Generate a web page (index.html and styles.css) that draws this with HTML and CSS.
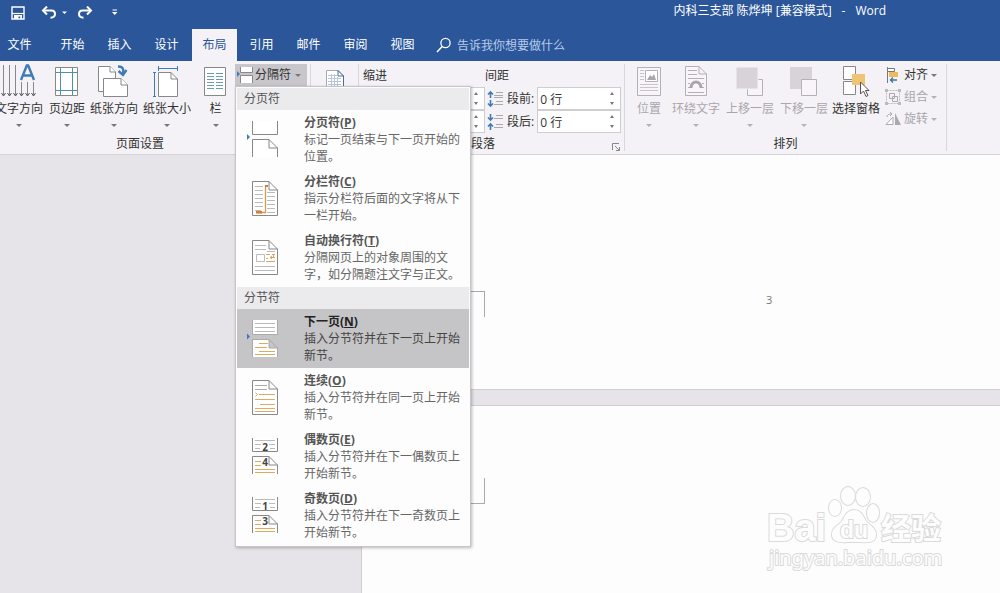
FILE: index.html
```html
<!DOCTYPE html>
<html lang="zh-CN">
<head>
<meta charset="utf-8">
<title>内科三支部 陈烨坤 [兼容模式] - Word</title>
<link rel="stylesheet" href="styles.css">
</head>
<body>
<div class="app">
  <header class="header">
    <div class="titlebar">
      <div class="quick">
        <button class="qbtn save" aria-label="保存"><svg width="14" height="14" viewBox="0 0 14 14"><path d="M1 1H13V13H1Z" fill="none" stroke="#fff" stroke-width="1.4"/><path d="M1 7.500H13" stroke="#fff" stroke-width="1.2"/><path d="M3 9H11V13H9.300V10.500H7.500V13H3Z" fill="#fff"/></svg></button>
        <button class="qbtn undo" aria-label="撤消"><svg width="16" height="13" viewBox="0 0 16 13"><path d="M2 4.500H10.500C13 4.500 14 6 14 8S12.500 11.500 9.500 11.700" fill="none" stroke="#fff" stroke-width="2"/><path d="M6 .5L2 4.500L6 8.500" fill="none" stroke="#fff" stroke-width="2"/></svg></button>
        <button class="qbtn more" aria-label="撤消列表"><svg width="6" height="4" viewBox="0 0 6 4"><path d="M0 .5H5L2.500 3Z" fill="#fff"/></svg></button>
        <button class="qbtn redo" aria-label="恢复"><svg width="16" height="13" viewBox="0 0 16 13"><path d="M14 4.500H5.500C3 4.500 2 6 2 8S3.500 11.500 6.500 11.700" fill="none" stroke="#fff" stroke-width="2"/><path d="M10 .5L14 4.500L10 8.500" fill="none" stroke="#fff" stroke-width="2"/></svg></button>
        <button class="qbtn custom" aria-label="自定义快速访问工具栏"><svg width="6" height="7" viewBox="0 0 6 7"><path d="M.5 1H5" stroke="#fff"/><path d="M0 3H5.500L2.700 6Z" fill="#fff"/></svg></button>
      </div>
      <div class="doc-title"><span>内科三支部 陈烨坤 [兼容模式]</span><span>-</span><span>Word</span></div>
    </div>
    <nav class="tabs">
      <button class="tab file">文件</button>
      <button class="tab">开始</button>
      <button class="tab">插入</button>
      <button class="tab">设计</button>
      <button class="tab active">布局</button>
      <button class="tab">引用</button>
      <button class="tab">邮件</button>
      <button class="tab">审阅</button>
      <button class="tab">视图</button>
      <label class="tell"><svg width="16" height="16" viewBox="0 0 16 16"><circle cx="9.500" cy="6" r="4.600" fill="none" stroke="#fff" stroke-width="1.300"/><path d="M6.200 9.500L1 15" stroke="#fff" stroke-width="1.500"/></svg><input class="tell-input" type="text" placeholder="告诉我你想要做什么" aria-label="告诉我你想要做什么"></label>
    </nav>
  </header>

  <div class="ribbon">
    <section class="group setup">
      <div class="tools">
        <button class="big"><svg width="36" height="34" viewBox="0 0 36 34"><g stroke="#888" fill="none"><path d="M2.500 1V31M8.500 1V31M14.500 1V31M20.500 18V31M26.500 18V31M32.500 18V31"/><path d="M.5 29L2.500 32L4.500 29M6.500 29L8.500 32L10.500 29M12.500 29L14.500 32L16.500 29M18.500 29L20.500 32L22.500 29M24.500 29L26.500 32L28.500 29M30.500 29L32.500 32L34.500 29" stroke="#555"/></g><path d="M20 16L25.800 1.500H27.200L33 16M22 11.500H31" fill="none" stroke="#3f7cb5" stroke-width="2.400"/></svg><span>文字方向</span><i class="arrow"></i></button>
        <button class="big"><svg width="24" height="34" viewBox="0 0 24 34"><path d="M.5 3.500H22.500V31.500H.5Z" fill="#fff" stroke="#888"/><path d="M5.500 4V31M17.500 4V31M1 8.500H22M1 26.500H22" stroke="#4d90ad"/></svg><span>页边距</span><i class="arrow"></i></button>
        <button class="big"><svg width="34" height="34" viewBox="0 0 34 34"><g fill="#fff" stroke="#888"><path d="M1.500 2.500H13L18.500 8V27.500H1.500Z"/><path d="M13 2.500V8H18.500"/><path d="M6.500 14.500H24L30.500 21V32.500H6.500Z"/><path d="M24 14.500V21H30.500"/></g><path d="M21 2.500C26 2.500 27 5 26 10M21.500 7L26 11L29.500 6" fill="none" stroke="#3f7cb5" stroke-width="2.400"/></svg><span>纸张方向</span><i class="arrow"></i></button>
        <button class="big"><svg width="28" height="34" viewBox="0 0 28 34"><path d="M5.500 8.500H18L24.500 15V32.500H5.500Z" fill="#fff" stroke="#888"/><path d="M18 8.500V15H24.500" fill="none" stroke="#888"/><path d="M5.500 4.500H24.500M5.500 2V7M24.500 2V7M1.500 9V32M0 8.500H3M0 32.500H3" stroke="#3f7cb5"/></svg><span>纸张大小</span><i class="arrow"></i></button>
        <button class="big"><svg width="26" height="34" viewBox="0 0 26 34"><path d="M1.500 3.500H22.500V31.500H1.500Z" fill="#fff" stroke="#888"/><path d="M4 9.500H11M13 9.500H20M4 12.500H11M13 12.500H20M4 15.500H11M13 15.500H20M4 18.500H11M13 18.500H20M4 21.500H11M13 21.500H20M4 24.500H11M13 24.500H20" stroke="#6d9bad"/></svg><span>栏</span><i class="arrow"></i></button>
        <div class="breaks">
          <button class="break-btn" aria-expanded="true"><svg width="18" height="18" viewBox="0 0 18 18"><path d="M3.500 1V6.500H15.500V1M3.500 17V9.500H15.500V17" fill="#fff" stroke="#888"/><path d="M0 5L3 8L0 11Z" fill="#3f7cb5"/></svg><span>分隔符</span><i class="arrow"></i></button>
          <div class="menu" role="menu">
            <div class="menu-head">分页符</div>
            <button class="item" role="menuitem"><svg width="34" height="38" viewBox="0 0 34 38"><path d="M6.500 0V13.500H31.500V0M6.500 36V18.500H23L31.500 27V36M23 18.500V27H31.500" fill="#fff" stroke="#888"/><path d="M1 13L4 16L1 19Z" fill="#3f7cb5"/></svg><span class="copy"><b>分页符(<u>P</u>)</b><span>标记一页结束与下一页开始的位置。</span></span></button>
            <button class="item" role="menuitem"><svg width="34" height="38" viewBox="0 0 34 38"><path d="M6.500 1.500H23L31.500 10V35.500H6.500ZM23 1.500V10H31.500" fill="#fff" stroke="#888"/><path d="M9 6.500H17M9 10.500H17M9 14.500H17M9 18.500H17M9 22.500H17M9 26.500H17M9 30.500H15M21 12.500H29M21 16.500H29M21 20.500H29M21 24.500H29M21 28.500H29M21 32.500H29" stroke="#bbb"/><path d="M11 32.500H19.500V6H22" fill="none" stroke="#d79a50" stroke-width="1.300"/><path d="M10 31H16V33.500H10ZM19 5H22V7H19Z" fill="#d07f3a"/></svg><span class="copy"><b>分栏符(<u>C</u>)</b><span>指示分栏符后面的文字将从下一栏开始。</span></span></button>
            <button class="item" role="menuitem"><svg width="34" height="38" viewBox="0 0 34 38"><path d="M6.500 1.500H23L31.500 10V35.500H6.500ZM23 1.500V10H31.500" fill="#fff" stroke="#888"/><path d="M9 6.500H20M9 10.500H20M9 27.500H29M9 31.500H29M21 12.500H29" stroke="#bbb"/><path d="M10.500 15.500H18.500V22.500H10.500Z" fill="#fff" stroke="#bbb"/><path d="M20 15.500H24M26 15.500H29M20 19.500H22M24 18.500H29M20 22.500H29M27.500 15.500V18.500M26 17L24 18.500L26 20" fill="none" stroke="#dba662"/></svg><span class="copy"><b>自动换行符(<u>T</u>)</b><span>分隔网页上的对象周围的文字，如分隔题注文字与正文。</span></span></button>
            <div class="menu-head">分节符</div>
            <button class="item selected" role="menuitem"><svg width="34" height="38" viewBox="0 0 34 38"><path d="M6.500 0V14.500H31.500V0M6.500 37V19.500H23L31.500 28V37M23 19.500V28H31.500" fill="#fff" stroke="#aaa"/><path d="M9 3.500H29M9 7.500H29M9 11.500H29" stroke="#bbb"/><path d="M13 23.500H22M9 27.500H21M13 31.500H29M9 34.500H29" stroke="#dcab60"/><path d="M1 13.500L4 16.500L1 19.500Z" fill="#4472c4"/></svg><span class="copy"><b>下一页(<u>N</u>)</b><span>插入分节符并在下一页上开始新节。</span></span></button>
            <button class="item" role="menuitem"><svg width="34" height="38" viewBox="0 0 34 38"><path d="M6.500 1.500H23L31.500 10V35.500H6.500ZM23 1.500V10H31.500" fill="#fff" stroke="#888"/><path d="M9 6.500H21M9 10.500H21" stroke="#aaa"/><path d="M13 15.500H29M9 20.500H29M14 25.500H29M9 29.500H29M9 32.500H29M9.500 13.500L11.500 15.500L9.500 17.500" fill="none" stroke="#e0ab68"/></svg><span class="copy"><b>连续(<u>O</u>)</b><span>插入分节符并在同一页上开始新节。</span></span></button>
            <button class="item" role="menuitem"><svg width="34" height="38" viewBox="0 0 34 38"><path d="M6.500 0V13.500H31.500V0M6.500 36V18.500H23L31.500 27V36M23 18.500V27H31.500" fill="#fff" stroke="#888"/><path d="M9 2.500H29M9 6.500H15M23 6.500H29M9 10.500H14M24 10.500H29" stroke="#bbb"/><path d="M9 23.500H15M9 27.500H15M9 31.500H29M9 34.500H29" stroke="#dcab60"/><text class="num" x="19" y="13">2</text><text class="num" x="19" y="28">4</text></svg><span class="copy"><b>偶数页(<u>E</u>)</b><span>插入分节符并在下一偶数页上开始新节。</span></span></button>
            <button class="item" role="menuitem"><svg width="34" height="38" viewBox="0 0 34 38"><path d="M6.500 0V13.500H31.500V0M6.500 36V18.500H23L31.500 27V36M23 18.500V27H31.500" fill="#fff" stroke="#888"/><path d="M9 2.500H29M9 6.500H15M23 6.500H29M9 10.500H14M24 10.500H29" stroke="#bbb"/><path d="M9 23.500H15M9 27.500H15M9 31.500H29M9 34.500H29" stroke="#dcab60"/><text class="num" x="19" y="13">1</text><text class="num" x="19" y="28">3</text></svg><span class="copy"><b>奇数页(<u>D</u>)</b><span>插入分节符并在下一奇数页上开始新节。</span></span></button>
          </div>
        </div>
      </div>
      <div class="group-name">页面设置</div>
    </section>

    <section class="group manuscript">
      <svg width="20" height="26" viewBox="0 0 20 26"><path d="M1.500 1.500H13L18.500 7V25.500H1.500Z" fill="#fff" stroke="#aaa"/><path d="M13 1.500L18.500 7V25M13 1.500V7H18.500" fill="none" stroke="#4a6d9c"/><path d="M3 6.500H12M3 9.500H16M3 12.500H16M3 15.500H16M6.500 5V20M9.500 5V20M12.500 8V20" stroke="#b8c6d9"/></svg>
    </section>

    <section class="group paragraph">
      <div class="para">
        <div class="para-col indent">
          <div class="para-title">缩进</div>
          <div class="field"><div class="spin"><input type="text" aria-label="左缩进" value=""><span class="steps"><button aria-label="增加"></button><button class="down" aria-label="减少"></button></span></div></div>
          <div class="field"><div class="spin"><input type="text" aria-label="右缩进" value=""><span class="steps"><button aria-label="增加"></button><button class="down" aria-label="减少"></button></span></div></div>
        </div>
        <div class="para-col">
          <div class="para-title">间距</div>
          <div class="field"><svg width="17" height="18" viewBox="0 0 17 18"><path d="M3.500 8V2M1 4.500L3.500 2L6 4.500M3.500 10V16M1 13.500L3.500 16L6 13.500" fill="none" stroke="#3f7cb5" stroke-width="1.600"/><path d="M9 2.500H16M7 5.500H16M9 11.500H16M7 14.500H16M7 7.500H16" stroke="#aaa"/></svg><label for="before">段前:</label><div class="spin"><input id="before" type="text" value="0 行"><span class="steps"><button aria-label="增加"></button><button class="down" aria-label="减少"></button></span></div></div>
          <div class="field"><svg width="17" height="18" viewBox="0 0 17 18"><path d="M3.500 1V7M1 4.500L3.500 7L6 4.500M3.500 17V11M1 13.500L3.500 11L6 13.500" fill="none" stroke="#3f7cb5" stroke-width="1.600"/><path d="M9 2.500H16M7 5.500H16M9 11.500H16M7 14.500H16" stroke="#aaa"/></svg><label for="after">段后:</label><div class="spin"><input id="after" type="text" value="0 行"><span class="steps"><button aria-label="增加"></button><button class="down" aria-label="减少"></button></span></div></div>
        </div>
      </div>
      <div class="group-name"><span>段落</span><button class="launcher" aria-label="段落设置"><svg width="8" height="8" viewBox="0 0 8 8"><path d="M.5 7V.5H7M3 3L7 7M7.500 4V7.500H4" fill="none" stroke="#888"/></svg></button></div>
    </section>

    <section class="group arrange">
      <div class="tools">
        <button class="big off"><svg width="26" height="34" viewBox="0 0 26 34"><path d="M1.500 3.500H24.500V31.500H1.500Z" fill="#f8f5f9" stroke="#b5afb7"/><path d="M4 6.500H8M4 9.500H8M4 12.500H8M4 15.500H8M4 20.500H22M4 23.500H22M4 26.500H22" stroke="#c9c3cb"/><path d="M9.500 6.500H21.500V17.500H9.500Z" fill="#fff" stroke="#b5afb7"/><path d="M11 16L14 11L16 13L18 10L20 16Z" fill="#aaa4ac"/></svg><span>位置</span><i class="arrow"></i></button>
        <button class="big off"><svg width="24" height="34" viewBox="0 0 24 34"><path d="M1.500 2.500H15L22.500 10V31.500H1.500ZM15 2.500V10H22.500" fill="#f8f5f9" stroke="#b5afb7"/><path d="M4 6.500H13M4 10.500H13M4 14.500H20M4 19.500H6M18 19.500H20M4 23.500H6M18 23.500H20M4 28.500H20" stroke="#b5afb7"/><path d="M7 24C7 16 17 16 17 24" fill="none" stroke="#aaa4ac" stroke-width="3"/></svg><span>环绕文字</span><i class="arrow"></i></button>
        <button class="big off"><svg width="28" height="34" viewBox="0 0 28 34"><path d="M11.500 15.500H26.500V31.500H11.500Z" fill="#f8f5f9" stroke="#b5afb7"/><path d="M0 3H22V25H0Z" fill="#d8d3d9" stroke="#f4f2f6"/></svg><span>上移一层</span><i class="arrow"></i></button>
        <button class="big off"><svg width="28" height="34" viewBox="0 0 28 34"><path d="M0 3H22V25H0Z" fill="#d8d3d9"/><path d="M11.500 15.500H26.500V31.500H11.500Z" fill="#f8f5f9" stroke="#b5afb7"/></svg><span>下移一层</span><i class="arrow"></i></button>
        <button class="big"><svg width="28" height="34" viewBox="0 0 28 34"><path d="M1.500 2.500H13.500V15.500H1.500ZM1.500 17.500H13.500V30.500H1.500Z" fill="#fff" stroke="#888"/><path d="M10 10H23V21H10Z" fill="#efc575"/><path d="M18.500 18V30L21.500 27L24 32.500L26 31.500L23.500 26.500H27Z" fill="#fff" stroke="#555"/></svg><span>选择窗格</span></button>
        <div class="small-tools">
          <button class="small"><svg width="16" height="16" viewBox="0 0 16 16"><path d="M2.500 0V16" stroke="#777"/><path d="M2.500 1.500H9.500V4.500H2.500Z" fill="#fff" stroke="#777"/><path d="M4 5H13V10H4Z" fill="#efb95f"/><path d="M5 13H12M8 10.500L5.500 13L8 15.500" fill="none" stroke="#3b7b96" stroke-width="1.400"/></svg><span>对齐</span><i class="arrow"></i></button>
          <button class="small off"><svg width="16" height="16" viewBox="0 0 16 16"><path d="M1.500 1.500H14.500V14.500H1.500Z" fill="none" stroke="#bbb" stroke-dasharray="2 1"/><path d="M4.500 4.500H9.500V9.500H4.500ZM7.500 7.500H12.500V12.500H7.500Z" fill="none" stroke="#aaa"/><path d="M0 0H3V3H0ZM13 0H16V3H13ZM0 13H3V16H0ZM13 13H16V16H13Z" fill="#bbb"/></svg><span>组合</span><i class="arrow"></i></button>
          <button class="small off"><svg width="16" height="16" viewBox="0 0 16 16"><path d="M1 13.500H8V6L1 13.500Z" fill="#fff" stroke="#aaa"/><path d="M10 2V14H16Z" fill="#aaa"/><path d="M2 6C2 3 5 3 7 3M5 1L7 3L5 5" fill="none" stroke="#aaa"/></svg><span>旋转</span><i class="arrow"></i></button>
        </div>
      </div>
      <div class="group-name">排列</div>
    </section>
  </div>

  <main class="workspace">
    <div class="page first"><span class="mark top"></span><span class="page-number">3</span></div>
    <div class="page second"><span class="mark bottom"></span></div>
    <svg class="watermark" width="184" height="92" viewBox="0 0 184 92" aria-label="Baidu 经验 jingyan.baidu.com">
      <g class="outline">
        <text class="wm-big" x="2" y="59">Bai</text>
        <path d="M89 28C96 28 98 34 101 39C105 44 112 46 111 54C110 62 101 60 89 60C78 60 69 62 67 54C66 46 73 44 77 39C80 34 82 28 89 28Z"/>
        <ellipse cx="70" cy="26" rx="6" ry="8"/><ellipse cx="83" cy="14" rx="7" ry="9"/><ellipse cx="98" cy="15" rx="7" ry="9"/><ellipse cx="108" cy="31" rx="6" ry="9"/>
        <text class="wm-du" x="75" y="56">du</text>
        <text class="wm-cn" x="116" y="57">经验</text>
        <text class="wm-url" x="4" y="83">jingyan.baidu.com</text>
      </g>
    </svg>
  </main>
</div>
</body>
</html>
```
FILE: styles.css
```css
* { box-sizing: border-box; }
body {
  margin: 0;
  font: 12px/16px "Open Sans", "Noto Sans CJK SC", sans-serif;
  color: #333;
}
button, input { font: inherit; color: inherit; }
button { border: 0; padding: 0; margin: 0; background: none; white-space: nowrap; }
svg { display: block; flex: none; }
.app { min-height: 100vh; display: flex; flex-direction: column; overflow: hidden; }

.header { background: #2b579a; color: #fff; }
.titlebar { display: flex; justify-content: space-between; height: 29px; padding: 0 114px 0 11px; }
.quick { display: flex; align-items: center; padding-bottom: 4px; }
.undo { margin-left: 16px; }
.more { margin-left: 5px; }
.redo { margin-left: 9px; }
.custom { margin-left: 19px; }
.doc-title { display: flex; gap: 10px; padding-top: 3px; white-space: nowrap; }

.tabs { display: flex; height: 32px; }
.tab { width: 47px; }
.file { width: 39px; margin-right: 10px; }
.active { width: 45px; margin: 0 1px 0 2px; background: #f4f2f6; color: #2b579a; }
.tell { display: flex; align-items: center; gap: 5px; margin-left: 10px; flex: 1; }
.tell-input { border: 0; padding: 2px 0 0; background: none; flex: 1; min-width: 0; outline: 0; }
.tell-input::placeholder { color: #b9cbe8; opacity: 1; }

.ribbon { display: flex; height: 94px; background: #f4f2f6; border-bottom: 1px solid #d5d3d7; }
.group { display: flex; flex-direction: column; border-right: 1px solid #d9d7db; margin: 3px 0; }
.group-name { display: flex; justify-content: center; margin-top: auto; line-height: 14px; }
.tools { display: grid; align-items: start; }
.setup { width: 311px; }
.setup .tools { grid-template-columns: 50px 46px 48px 58px 39px 72px; margin-left: -6px; }
.setup .group-name { padding-right: 30px; }
.big { display: flex; flex-direction: column; align-items: center; color: #333; }
.big span { padding-top: 3px; }
.big .arrow { margin-top: 7px; }
.arrow { display: block; border: 3px solid transparent; border-top-color: #777; border-bottom: 0; }
.off { color: #aaa6ac; }
.off .arrow { border-top-color: #b5b1b7; }

.breaks { position: relative; z-index: 5; }
.break-btn { display: flex; align-items: center; width: 100%; height: 22px; padding-left: 2px; background: #c8c6ca; }
.break-btn .arrow { margin-left: 4px; }
.menu {
  position: absolute;
  top: 22px;
  left: 0;
  width: 236px;
  padding: 1px;
  background: #fdfdfd;
  border: 1px solid #c6c4c8;
  box-shadow: 1px 1px 3px #0004;
}
.menu-head { height: 22px; padding: 3px 7px; background: #ebeaed; color: #555; }
.item {
  display: flex;
  align-items: center;
  width: 100%;
  height: 59px;
  padding-left: 9px;
  gap: 24px;
  text-align: left;
  white-space: normal;
  color: #666;
}
.item.selected { background: #c5c4c6; color: #444; }
.copy { display: flex; flex-direction: column; flex: 1; line-height: 17px; }
.copy b { color: #555; }
.selected b { color: #222; }
.num { font: bold 10px "Open Sans", sans-serif; fill: #444; text-anchor: middle; }

.manuscript { width: 48px; align-items: center; padding-top: 5px; }
.paragraph { width: 266px; }
.para { display: flex; }
.para-col { display: flex; flex-direction: column; flex: 1; }
.indent { flex: 0 0 126px; padding-left: 4px; }
.para-title { height: 23px; padding-top: 4px; }
.field { display: flex; align-items: center; gap: 3px; height: 23px; }
.para-col + .para-col .field { padding-left: 2px; }
.spin { display: flex; flex: 1; height: 23px; margin-right: 3px; background: #fff; border: 1px solid #cfcdd1; }
.indent .spin { margin-right: 0; }
.spin input { flex: 1; min-width: 0; width: 10px; border: 0; padding: 2px 2px 0; background: none; }
.steps { display: flex; flex-direction: column; justify-content: space-between; width: 16px; padding: 4px 0; align-items: center; }
.steps button { border: 2px solid transparent; border-bottom: 3px solid #777; border-top: 0; }
.steps .down { border-top: 3px solid #777; border-bottom: 0; }
.paragraph .group-name { position: relative; padding-right: 17px; }
.launcher { position: absolute; right: 4px; bottom: 0; }

.arrange { width: 322px; }
.arrange .tools { grid-template-columns: 48px 46px 62px 46px 58px 60px; }
.small-tools { display: flex; flex-direction: column; }
.small { display: flex; align-items: center; height: 22px; gap: 3px; }

.workspace { position: relative; flex: 1; display: flex; flex-direction: column; gap: 15px; padding-left: 361px; background: #e6e4e8; }
.page { display: flex; align-items: flex-start; background: #fdfdfd; border: 1px solid #d0ced2; border-right: 0; }
.first { padding: 136px 0 72px 98px; border-top: 0; }
.second { flex: 1; padding: 72px 0 90px 98px; border-bottom: 0; }
.mark { width: 25px; height: 26px; border-right: 1px solid #aaa; }
.top { border-top: 1px solid #aaa; }
.bottom { border-bottom: 1px solid #aaa; }
.page-number { margin-left: 281px; font-size: 11px; line-height: 18px; color: #777; }
.watermark { position: absolute; right: 51px; bottom: 20px; }
.outline { fill: #fdfdfd; stroke: #dadada; stroke-width: 2px; paint-order: stroke; }
.wm-big { font: bold 38px "Liberation Sans", sans-serif; }
.wm-du { font: bold 23px "Liberation Sans", sans-serif; }
.wm-cn { font: bold 30px "Noto Sans CJK SC", sans-serif; }
.wm-url { font: 20px "Noto Sans", sans-serif; }
```
